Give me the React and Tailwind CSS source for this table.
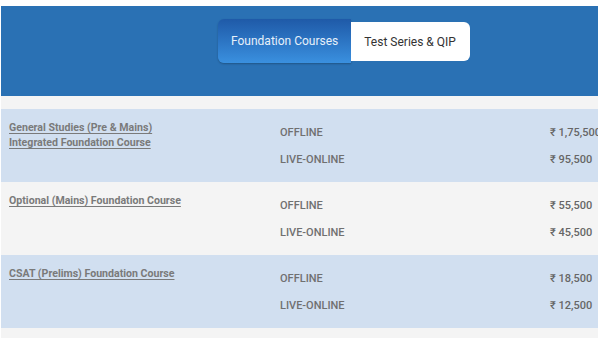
export default function App() {
  const rows = [
    {
      title: ["General Studies (Pre & Mains)", "Integrated Foundation Course"],
      prices: ["₹ 1,75,500", "₹ 95,500"],
      bg: "bg-[#d1dff0]",
    },
    {
      title: ["Optional (Mains) Foundation Course"],
      prices: ["₹ 55,500", "₹ 45,500"],
      bg: "bg-[#f4f4f4]",
    },
    {
      title: ["CSAT (Prelims) Foundation Course"],
      prices: ["₹ 18,500", "₹ 12,500"],
      bg: "bg-[#d1dff0]",
    },
  ];
  return (
    <div
      className="w-[600px] h-[338px] overflow-hidden bg-white pt-[6px]"
      style={{ fontFamily: "Roboto, 'Liberation Sans', sans-serif" }}
    >
      <div className="ml-[1px] w-[597px] h-[332px] overflow-hidden bg-[#f4f4f4]">
        <div className="h-[90px] bg-[#2a71b4] flex pt-[13px]">
          <div className="ml-[217px] flex items-start">
            <div className="h-[44px] px-[13px] flex items-center rounded-l-[6px] bg-gradient-to-b from-[#1f5aa8] to-[#3a90df] text-[#e6f0fa] text-[12px] shadow-[0_1px_2px_rgba(0,0,0,0.25)]">
              Foundation Courses
            </div>
            <div className="mt-[3px] h-[39px] pl-[13px] pr-[14px] flex items-center rounded-r-[6px] bg-white text-[#333] text-[12px]">
              Test Series &amp; QIP
            </div>
          </div>
        </div>
        <div className="h-[13px]" />
        {rows.map((r, i) => (
          <div key={i} className={`h-[73px] flex ${r.bg}`}>
            <div className="w-[279px] shrink-0 pl-[8px] pt-[11px] text-[10.6px] leading-[15px] font-bold text-[#7a7a7a]">
              {r.title.map((t, j) => (
                <div key={j}>
                  <span className="underline underline-offset-2">{t}</span>
                </div>
              ))}
            </div>
            <div className="flex-1 min-w-0 pt-[11px] text-[11px] font-medium text-[#707070]">
              {["OFFLINE", "LIVE-ONLINE"].map((m, j) => (
                <div key={j} className="h-[27px] flex items-center">
                  <div className="w-[270px] shrink-0">{m}</div>
                  <div className="whitespace-nowrap text-[#666]">{r.prices[j]}</div>
                </div>
              ))}
            </div>
          </div>
        ))}
      </div>
    </div>
  );
}
